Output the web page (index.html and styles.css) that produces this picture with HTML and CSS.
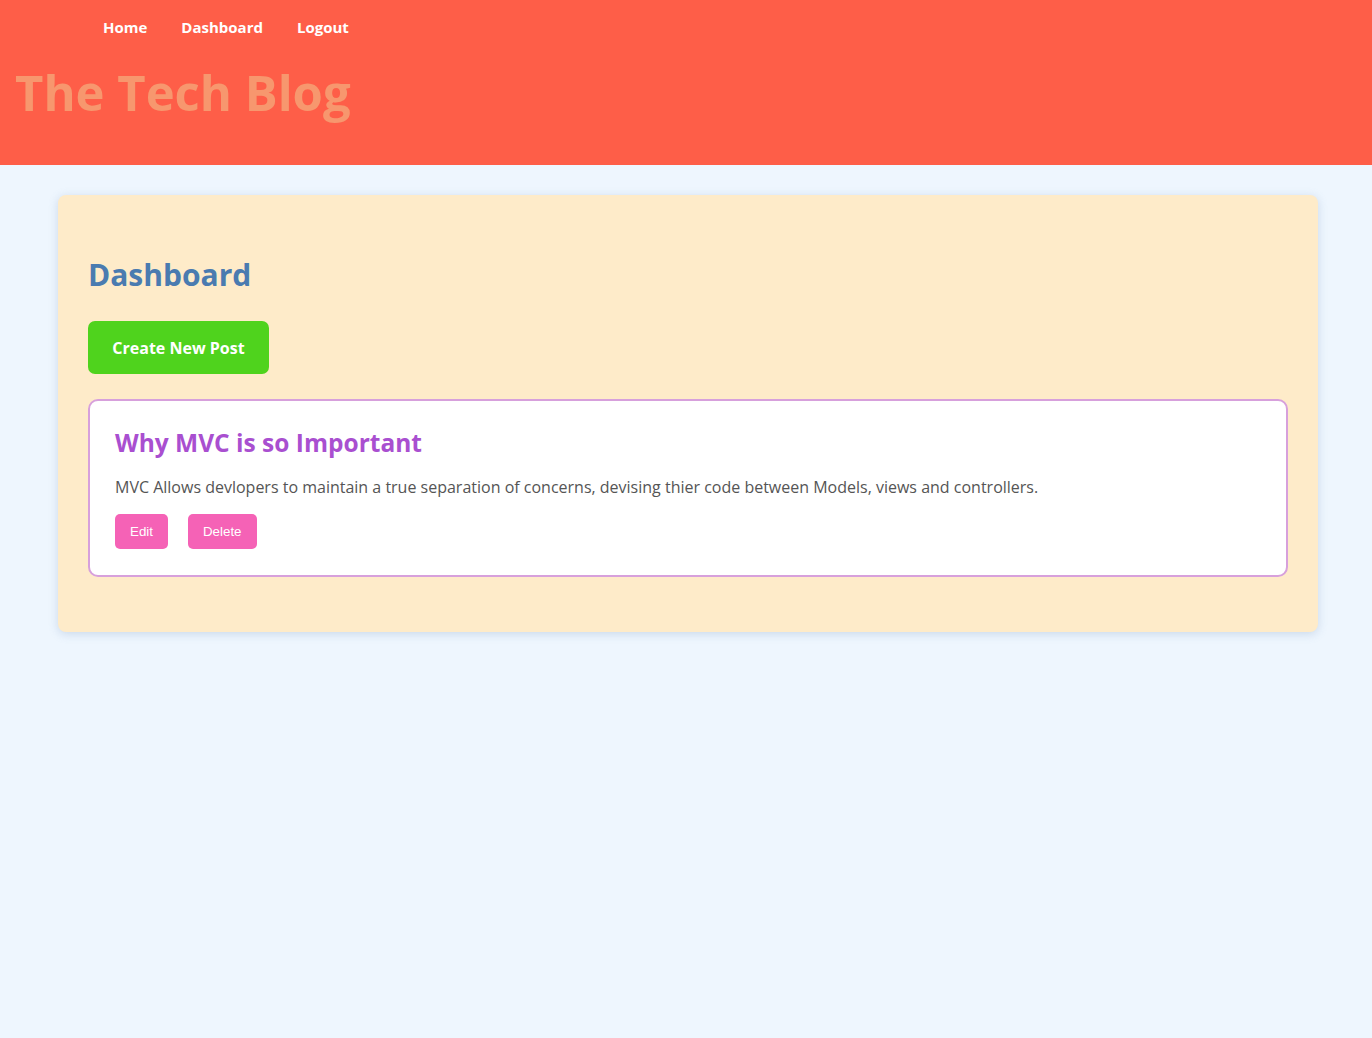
FILE: index.html
```html
<!DOCTYPE html>
<html lang="en">
<head>
<meta charset="utf-8">
<title>The Tech Blog</title>
<link rel="stylesheet" href="styles.css">
</head>
<body>
<header class="site-header">
  <nav class="nav">
    <a class="nav-link" href="#">Home</a>
    <a class="nav-link" href="#">Dashboard</a>
    <a class="nav-link" href="#">Logout</a>
  </nav>
  <h1 class="site-title">The Tech Blog</h1>
</header>
<main class="panel">
  <h2 class="panel-title">Dashboard</h2>
  <button class="btn-create">Create New Post</button>
  <article class="post">
    <h3 class="post-title">Why MVC is so Important</h3>
    <p class="post-body">MVC Allows devlopers to maintain a true separation of concerns, devising thier code between Models, views and controllers.</p>
    <div class="post-actions">
      <button class="btn-small">Edit</button>
      <button class="btn-small">Delete</button>
    </div>
  </article>
</main>
</body>
</html>
```
FILE: styles.css
```css
html, body {
  margin: 0;
  padding: 0;
}
body {
  background: #eef6fe;
  font-family: "Comic Sans MS", "Open Sans", sans-serif;
  min-height: 1038px;
}
.site-header {
  background: #fe5e48;
  height: 165px;
  box-sizing: border-box;
  padding: 16px 0 0 15px;
}
.nav {
  display: flex;
  gap: 34px;
  padding-left: 88px;
}
.nav-link {
  color: #fff;
  text-decoration: none;
  font-weight: bold;
  font-size: 15px;
  line-height: 22px;
}
.site-title {
  margin: 19px 0 0 0;
  color: #f7976e;
  font-size: 49px;
  line-height: 70px;
  font-weight: bold;
}
.panel {
  margin: 30px 54px 0 58px;
  background: #feebc9;
  border-radius: 8px;
  padding: 60px 30px 55px 30px;
  box-shadow: 0 2px 10px rgba(120, 150, 190, 0.3);
}
.panel-title {
  margin: 0;
  color: #4a7bb0;
  font-size: 30px;
  line-height: 40px;
}
.btn-create {
  margin-top: 26px;
  display: block;
  background: #4fd31d;
  color: #fff;
  border: none;
  border-radius: 7px;
  width: 181px;
  height: 53px;
  font-family: inherit;
  font-size: 16px;
  font-weight: bold;
}
.post {
  margin-top: 25px;
  background: #fff;
  border: 2px solid #d7a0dc;
  border-radius: 10px;
  padding: 25px 25px 26px 25px;
}
.post-title {
  margin: 0;
  color: #a94fd0;
  font-size: 24.5px;
  line-height: 34px;
}
.post-body {
  margin: 15px 0 0 0;
  color: #555;
  font-size: 16px;
  line-height: 24px;
}
.post-actions {
  margin-top: 15px;
  display: flex;
  gap: 20px;
}
.btn-small {
  background: #f562b6;
  color: #fff;
  border: none;
  border-radius: 5px;
  height: 35px;
  padding: 0 15px;
  font-family: "Liberation Sans", Arial, sans-serif;
  font-size: 13.333px;
}
```
